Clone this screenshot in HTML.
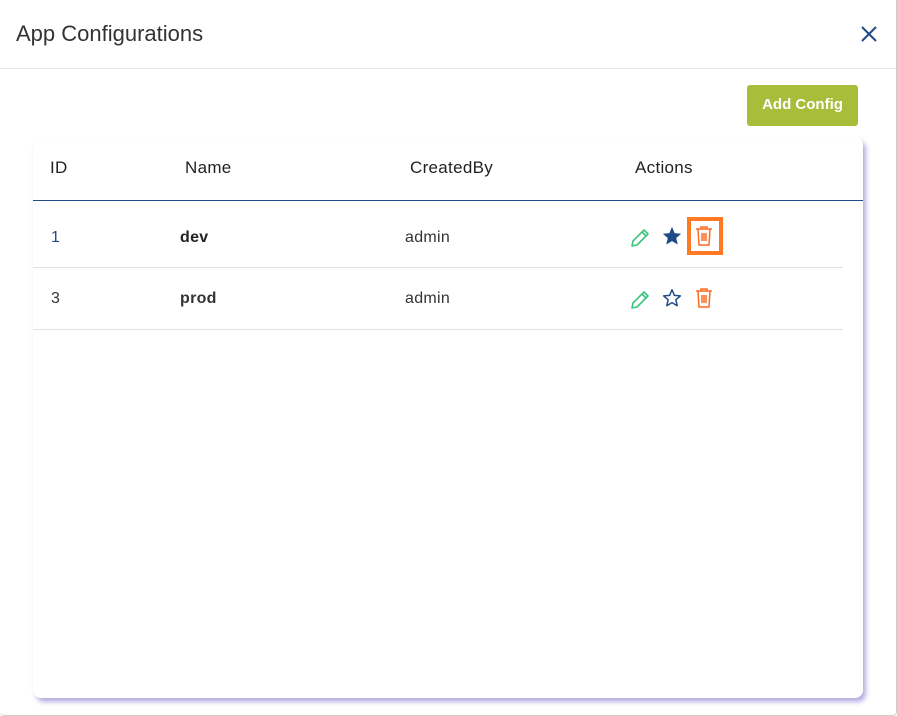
<!DOCTYPE html>
<html><head><style>
*{box-sizing:border-box;margin:0;padding:0}
body{width:897px;height:716px;background:#fff;font-family:"Liberation Sans",sans-serif;position:relative;overflow:hidden}
.frame{position:absolute;left:0;top:0;width:897px;height:716px;border-right:1px solid #ccc;border-bottom:1px solid #ccc;border-radius:0 0 4px 4px}
.title{position:absolute;left:16px;top:21px;font-size:22px;color:#333}
.hdrline{position:absolute;left:0;top:68px;width:896px;height:1px;background:#e6e6e6}
.close{position:absolute;left:860px;top:25px}
.btn{position:absolute;left:747px;top:85px;width:111px;height:41px;background:#a8bd3a;border-radius:3px;color:#fff;font-weight:bold;font-size:15px;text-align:center;line-height:40px}
.card{position:absolute;left:33px;top:137px;width:830px;height:561px;background:#fff;border-radius:8px;box-shadow:3px 4px 5px rgba(120,110,200,.55)}
.t{position:absolute;font-size:16px;color:#222;letter-spacing:.3px}
.hd{font-weight:normal;font-size:17px;color:#222}
</style></head><body>
<div class="frame"></div>
<div class="title">App Configurations</div>
<svg class="close" width="18" height="18" viewBox="0 0 18 18"><path d="M2 2L16 16M16 2L2 16" stroke="#1f4a85" stroke-width="2"/></svg>
<div class="hdrline"></div>
<div class="btn">Add Config</div>
<div class="card">
<div class="t hd" style="left:17px;top:21px">ID</div>
<div class="t hd" style="left:152px;top:21px">Name</div>
<div class="t hd" style="left:377px;top:21px">CreatedBy</div>
<div class="t hd" style="left:602px;top:21px">Actions</div>
<div style="position:absolute;left:0;top:63px;width:830px;height:1px;background:#1f4a85"></div>
<div class="t" style="left:18px;top:92px;color:#1f4a85">1</div>
<div class="t" style="left:147px;top:92px;font-weight:bold">dev</div>
<div class="t" style="left:372px;top:92px;color:#333">admin</div>
<div style="position:absolute;left:0;top:130px;width:810px;height:1px;background:#e2e2e2"></div>
<div class="t" style="left:18px;top:153px;color:#333">3</div>
<div class="t" style="left:147px;top:153px;font-weight:bold;color:#333">prod</div>
<div class="t" style="left:372px;top:153px;color:#333">admin</div>
<div style="position:absolute;left:0;top:192px;width:810px;height:1px;background:#e2e2e2"></div>
</div>
<svg style="position:absolute;left:629px;top:227px" width="22" height="22" viewBox="0 0 22 22"><path d="M3 19L4 14L15 3L19 7L8 18Z M13 5L17 9" fill="none" stroke="#3cc47c" stroke-width="1.6" stroke-linejoin="round"/></svg>
<svg style="position:absolute;left:661px;top:225px" width="22" height="22" viewBox="0 0 24 24"><path d="M12 2l2.9 6.9 7.1.6-5.4 4.7 1.7 7.1L12 17.6 5.7 21.3l1.7-7.1L2 9.5l7.1-.6z" fill="#1f4a85"/></svg>
<div style="position:absolute;left:687px;top:217px;width:36px;height:38px;border:4px solid #ff7a22"></div>
<svg style="position:absolute;left:694px;top:225px" width="20" height="22" viewBox="0 0 20 22"><path d="M2 4H18M7 4V2H13V4M4 4L5 20H15L16 4M8 8V16M10 8V16M12 8V16" fill="none" stroke="#ff6a22" stroke-width="1.5"/></svg>
<svg style="position:absolute;left:629px;top:289px" width="22" height="22" viewBox="0 0 22 22"><path d="M3 19L4 14L15 3L19 7L8 18Z M13 5L17 9" fill="none" stroke="#3cc47c" stroke-width="1.6" stroke-linejoin="round"/></svg>
<svg style="position:absolute;left:661px;top:287px" width="22" height="22" viewBox="0 0 24 24"><path d="M12 3l2.6 6.1 6.5.6-4.9 4.3 1.5 6.4L12 17 6.3 20.4l1.5-6.4-4.9-4.3 6.5-.6z" fill="none" stroke="#1f4a85" stroke-width="1.6" stroke-linejoin="round"/></svg>
<svg style="position:absolute;left:694px;top:287px" width="20" height="22" viewBox="0 0 20 22"><path d="M2 4H18M7 4V2H13V4M4 4L5 20H15L16 4M8 8V16M10 8V16M12 8V16" fill="none" stroke="#ff6a22" stroke-width="1.5"/></svg>
</body></html>
